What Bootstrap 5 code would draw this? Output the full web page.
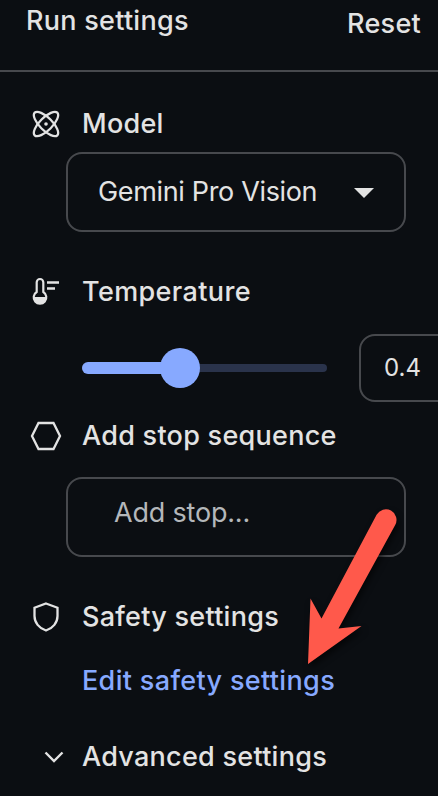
<!DOCTYPE html>
<html lang="en" data-bs-theme="dark">
<head>
<meta charset="utf-8">
<meta name="viewport" content="width=device-width, initial-scale=1">
<title>Run settings</title>
<link href="https://cdn.jsdelivr.net/npm/bootstrap@5.3.0/dist/css/bootstrap.min.css" rel="stylesheet">
<style>
body{background:#0b0e12;color:#e3e3e3;font-family:Inter,Roboto,sans-serif;font-size:27px;line-height:36px;font-weight:500;letter-spacing:.27px;white-space:nowrap}
.panel{width:438px;height:796px}
.panel-head{height:72px;border-bottom:2px solid #47494d;padding:3px 17px 0 26px;margin-bottom:34px}
.reset{margin-top:3px}
.setting{height:36px;padding-left:30px;gap:20px}
.setting svg,.arrow{flex:none;display:block;overflow:visible}
.field{width:340px;height:80px;margin:10px 0 42px 66px;border:2px solid #47494d;border-radius:16px;font-weight:400}
.model-field{padding-left:30px;letter-spacing:-.34px}
.caret{margin-right:23px}
.stop-field{margin-top:23px;padding:0 0 8px 46px;color:#b4b7ba;letter-spacing:-.2px}
.temp-label{letter-spacing:.38px}
.temp-row{height:68px;margin:24px 0 15px;padding-left:82px}
.track{width:245px;height:8px;border-radius:4px;background:#2a334b;flex:none}
.track-fill{width:98px;height:12px;border-radius:6px;background:#87a9ff}
.knob{width:40px;height:40px;flex:none;margin-left:-20px;border-radius:50%;background:#87a9ff}
.number{width:100px;height:68px;margin-left:32px;padding-left:23px;border:2px solid #47494d;border-radius:16px;font-size:24px;font-weight:400;letter-spacing:0;flex:none}
.edit{color:#87a9ff;margin:28px 0 40px 82px;height:36px;letter-spacing:.34px}
.stop-label{margin-top:16px}
.arrow{left:296px;top:500px;filter:drop-shadow(2px 4px 3px rgba(0,0,0,.6))}
</style>
</head>
<body>
<main class="panel position-relative overflow-hidden">
<header class="panel-head d-flex justify-content-between align-items-start"><span>Run settings</span><span class="reset">Reset</span></header>
<div class="setting d-flex align-items-center">
<svg width="32" height="32" viewBox="0 0 32 32" fill="none" stroke="#e3e3e3" stroke-width="2.3"><ellipse cx="16" cy="16" rx="16" ry="6.300" transform="rotate(45 16 16)"/><ellipse cx="16" cy="16" rx="16" ry="6.300" transform="rotate(-45 16 16)"/><circle cx="16" cy="16" r="1.800" fill="#e3e3e3" stroke="none"/></svg>
<span>Model</span></div>
<div class="field model-field d-flex align-items-center"><span>Gemini Pro Vision</span>
<svg class="ms-auto caret" width="32" height="12" viewBox="0 0 32 12"><path d="M5 2h20l-10 10z" fill="#e3e3e3"/></svg></div>
<div class="setting d-flex align-items-center">
<svg width="32" height="32" viewBox="0 0 32 32"><path d="M6.700 16V6.300a3.300 3.300 0 0 1 6.600 0V16a6.300 6.300 0 1 1-6.600 0z" fill="none" stroke="#e3e3e3" stroke-width="2.200"/><path d="M4 21h12v1a6 6 0 0 1-12 0z" fill="#e3e3e3"/><path d="M17 6.500h12M17 12.500h8" stroke="#e3e3e3" stroke-width="2.400"/></svg>
<span class="temp-label">Temperature</span></div>
<div class="temp-row d-flex align-items-center"><div class="track d-flex align-items-center"><div class="track-fill"></div><div class="knob"></div></div><div class="number d-flex align-items-center"><span>0.4</span></div></div>
<div class="setting stop-label d-flex align-items-center">
<svg width="32" height="32" viewBox="0 0 32 32"><path d="M8.500 3h15L30 16l-6.500 13h-15L2 16z" fill="none" stroke="#e3e3e3" stroke-width="2.300"/></svg>
<span>Add stop sequence</span></div>
<div class="field stop-field d-flex align-items-center"><span>Add stop...</span></div>
<div class="setting d-flex align-items-center">
<svg width="32" height="32" viewBox="0 0 32 32"><path d="M16 2.500L27.500 6.700V15c0 6.500-4.500 12.400-11.500 14.500C9 27.400 4.500 21.500 4.500 15V6.700z" fill="none" stroke="#e3e3e3" stroke-width="2.300"/></svg>
<span>Safety settings</span></div>
<div class="edit">Edit safety settings</div>
<div class="setting d-flex align-items-center">
<svg width="32" height="32" viewBox="0 0 32 32"><path d="M15.500 11.500l8.500 8.500L32.500 11.500" fill="none" stroke="#e3e3e3" stroke-width="2.400"/></svg>
<span>Advanced settings</span></div>
<svg class="arrow position-absolute" width="120" height="170" viewBox="296 500 120 170"><path d="M308 664L310.500 598.500L321.500 618.500L376.600 514.800A10.600 10.600 0 0 1 395.200 525L338.500 628.500L361.500 626z" fill="#ff594b"/></svg>
</main>
<script src="https://cdn.jsdelivr.net/npm/bootstrap@5.3.0/dist/js/bootstrap.bundle.min.js"></script>
</body>
</html>
